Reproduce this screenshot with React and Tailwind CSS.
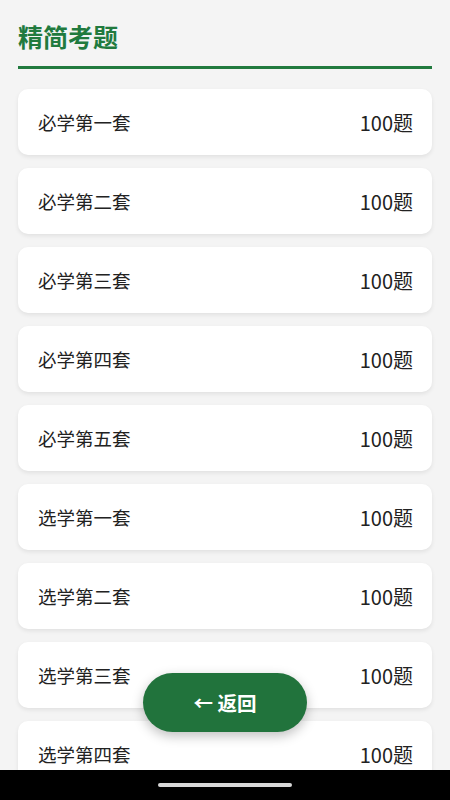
const SETS = [
  "必学第一套",
  "必学第二套",
  "必学第三套",
  "必学第四套",
  "必学第五套",
  "选学第一套",
  "选学第二套",
  "选学第三套",
  "选学第四套",
];

export default function App() {
  return (
    <div
      className="relative h-[800px] w-full flex flex-col overflow-hidden bg-[#f4f4f4]"
      style={{ fontFamily: '"Noto Sans CJK SC", "Noto Sans", sans-serif' }}
    >
      <div className="flex-1 overflow-hidden px-[18px]">
        {/* header */}
        <div className="pt-[18px] pb-[12px] border-b-[3px] border-[#217a3e]">
          <h1 className="text-[25px] leading-[36px] font-bold text-[#217a3e]">精简考题</h1>
        </div>

        {/* list */}
        <div className="flex flex-col gap-[13px] pt-[20px]">
          {SETS.map((name) => (
            <div
              key={name}
              className="h-[66px] shrink-0 flex items-center justify-between bg-white rounded-[10px] pl-[20px] pr-[19px] pt-[2px] shadow-[0_2px_4px_rgba(0,0,0,0.08)]"
            >
              <span className="text-[18.5px] text-[#222]">{name}</span>
              <span className="text-[20px] text-[#222]">100题</span>
            </div>
          ))}
        </div>
      </div>

      {/* floating back button */}
      <button className="absolute left-[143px] top-[673px] w-[164px] h-[59px] rounded-full bg-[#21733c] text-white text-[19.5px] font-bold flex items-center justify-center shadow-[0_4px_12px_rgba(0,0,0,0.25)]">
        ← 返回
      </button>

      {/* system nav bar */}
      <div className="h-[30px] shrink-0 bg-black flex items-center justify-center">
        <div className="w-[134px] h-[4px] rounded-full bg-[#d8d8d8]"></div>
      </div>
    </div>
  );
}
